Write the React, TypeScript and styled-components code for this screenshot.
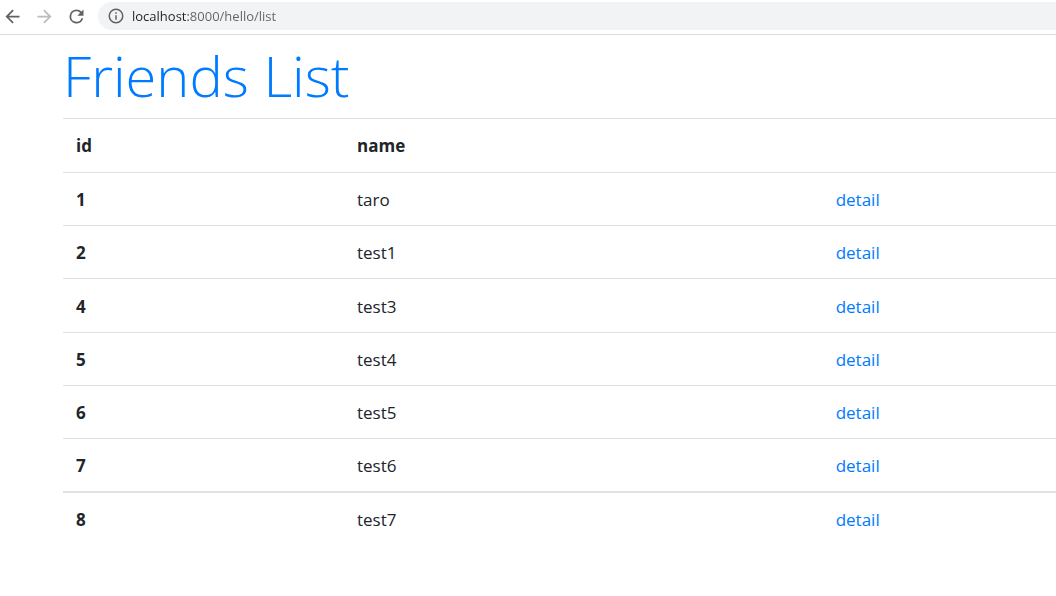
import React from "react";
import styled, { createGlobalStyle } from "styled-components";

const GlobalStyle = createGlobalStyle`
  * { box-sizing: border-box; }
  body {
    margin: 0;
    background: #fff;
    color: #212529;
    font-family: "Open Sans", "Noto Sans", sans-serif;
    font-size: 17px;
    line-height: 26px;
  }
`;

const Toolbar = styled.header`
  display: flex;
  align-items: center;
  height: 35px;
  padding: 0 0 2px 2px;
  border-bottom: 1px solid #dadce0;
`;

const NavButton = styled.button<{ $muted?: boolean }>`
  display: grid;
  place-items: center;
  flex: none;
  width: 32px;
  height: 32px;
  padding: 0 11px 0 0;
  border: 0;
  background: none;
  color: ${(p) => (p.$muted ? "#babcbe" : "#5f6368")};
`;

const Icon = styled.svg`
  display: block;
  width: 21px;
  height: 21px;
  fill: currentColor;
`;

const AddressBar = styled.label`
  display: flex;
  flex: 1;
  align-items: center;
  gap: 7px;
  height: 28px;
  padding-left: 9px;
  border-radius: 14px 0 0 14px;
  background: #f1f3f4;
  color: #5f6368;
`;

const InfoIcon = styled(Icon)`
  flex: none;
  width: 18px;
  height: 18px;
`;

const Address = styled.input`
  flex: 1;
  min-width: 0;
  height: 24px;
  padding: 0;
  border: 0;
  outline: 0;
  background: linear-gradient(90deg, #202124 56px, #5f6368 56px);
  background-clip: text;
  color: transparent;
  font-family: "Open Sans", "Noto Sans", sans-serif;
  font-size: 13px;
`;

const Page = styled.main`
  padding-left: 63px;
`;

const Title = styled.h1`
  margin: 0;
  padding: 4px 0 7px;
  color: #007bff;
  font-size: 56px;
  font-weight: 300;
  line-height: 72px;
`;

const Table = styled.table`
  width: 100%;
  table-layout: fixed;
  border-collapse: separate;
  border-spacing: 0;
  text-align: left;
`;

const IdColumn = styled.col`
  width: 28.3%;
`;

const NameColumn = styled.col`
  width: 48.2%;
`;

const HeadRow = styled.tr`
  height: 54px;
`;

const HeadCell = styled.th`
  padding: 1px 13px 0;
  border-top: 1px solid #dee2e6;
  font-weight: 700;
`;

const Cell = styled.td`
  padding: 1px 13px 0;
  border-top: 1px solid #dee2e6;
`;

const Row = styled.tr`
  height: 53px;
  &:nth-child(3) {
    height: 54px;
  }
  & > * {
    padding-top: 2px;
  }
  &:last-child > * {
    border-top-width: 2px;
  }
`;

const DetailLink = styled.a`
  color: #007bff;
  text-decoration: none;
`;

const friends = [
  { id: 1, name: "taro" },
  { id: 2, name: "test1" },
  { id: 4, name: "test3" },
  { id: 5, name: "test4" },
  { id: 6, name: "test5" },
  { id: 7, name: "test6" },
  { id: 8, name: "test7" },
];

export default function App() {
  return (
    <>
      <GlobalStyle />
      <Toolbar>
        <NavButton aria-label="Back">
          <Icon viewBox="0 0 24 24">
            <path d="M20 11H7.83l5.59-5.59L12 4l-8 8 8 8 1.41-1.41L7.83 13H20v-2z" />
          </Icon>
        </NavButton>
        <NavButton aria-label="Forward" $muted>
          <Icon viewBox="0 0 24 24">
            <path d="M12 4l-1.41 1.41L16.17 11H4v2h12.17l-5.58 5.59L12 20l8-8z" />
          </Icon>
        </NavButton>
        <NavButton aria-label="Reload">
          <Icon viewBox="0 0 24 24">
            <path d="M17.65 6.35A7.96 7.96 0 0 0 12 4a8 8 0 1 0 7.73 10h-2.08A6 6 0 1 1 12 6c1.66 0 3.14.69 4.22 1.78L13 11h7V4l-2.35 2.35z" />
          </Icon>
        </NavButton>
        <AddressBar>
          <InfoIcon viewBox="0 0 24 24" aria-hidden="true">
            <path d="M11 17h2v-6h-2v6zm1-15a10 10 0 1 0 0 20 10 10 0 0 0 0-20zm0 18a8 8 0 1 1 0-16 8 8 0 0 1 0 16zM11 9h2V7h-2v2z" />
          </InfoIcon>
          <Address aria-label="Address" defaultValue="localhost:8000/hello/list" spellCheck={false} />
        </AddressBar>
      </Toolbar>
      <Page>
        <Title>Friends List</Title>
        <Table>
          <colgroup>
            <IdColumn />
            <NameColumn />
            <col />
          </colgroup>
          <thead>
            <HeadRow>
              <HeadCell scope="col">id</HeadCell>
              <HeadCell scope="col">name</HeadCell>
              <Cell />
            </HeadRow>
          </thead>
          <tbody>
            {friends.map((friend) => (
              <Row key={friend.id}>
                <HeadCell scope="row">{friend.id}</HeadCell>
                <Cell>{friend.name}</Cell>
                <Cell>
                  <DetailLink href={`#${friend.id}`}>detail</DetailLink>
                </Cell>
              </Row>
            ))}
          </tbody>
        </Table>
      </Page>
    </>
  );
}
